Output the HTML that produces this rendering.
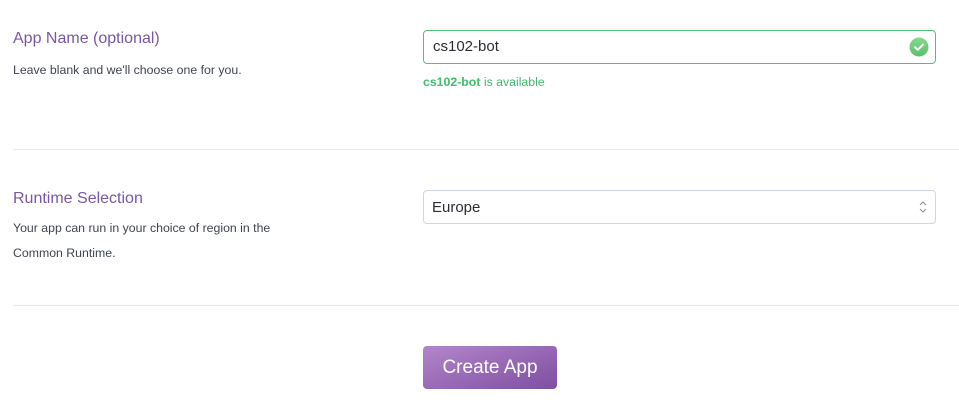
<!DOCTYPE html>
<html><head><style>
body{margin:0;width:959px;height:405px;background:#fff;font-family:"Liberation Sans",sans-serif;position:relative;overflow:hidden}
.a{position:absolute;white-space:nowrap}
.t{color:#79589f;font-size:16px}
.d{color:#3f4452;font-size:12.3px}
.box{position:absolute;left:423px;width:511px;height:32px;border-radius:4px;background:#fff;box-sizing:border-box}
.hr{position:absolute;left:13px;right:0;height:1px;background:#e7e9ee}
</style></head><body>
<div class="a t" style="left:13px;top:30px">App Name (optional)</div>
<div class="a d" style="left:13px;top:63px">Leave blank and we'll choose one for you.</div>
<div class="box" style="top:30px;width:513px;height:34px;border:1px solid #52c07a"></div>
<div class="a" style="left:433px;top:38px;font-size:15px;color:#2c2c35">cs102-bot</div>
<svg class="a" style="left:909px;top:37px" width="20" height="20" viewBox="0 0 20 20"><defs><linearGradient id="g" x1="0" y1="0" x2="0" y2="1"><stop offset="0" stop-color="#86da8f"/><stop offset="1" stop-color="#5bc06d"/></linearGradient></defs><circle cx="10" cy="10" r="9.5" fill="url(#g)"/><path d="M6 10.2l2.7 2.6L14 7.6" fill="none" stroke="#fff" stroke-width="2" stroke-linecap="round" stroke-linejoin="round"/></svg>
<div class="a" style="left:423px;top:75px;font-size:12.3px;color:#3fbc6c"><b>cs102-bot</b> is available</div>
<div class="hr" style="top:149px"></div>
<div class="a t" style="left:13px;top:190px">Runtime Selection</div>
<div class="a d" style="left:13px;top:221px">Your app can run in your choice of region in the</div>
<div class="a d" style="left:13px;top:246px">Common Runtime.</div>
<div class="box" style="top:190px;width:513px;height:34px;border:1px solid #cfd7e6"></div>
<div class="a" style="left:432px;top:199px;font-size:15px;color:#2c2c35">Europe</div>
<svg class="a" style="left:918px;top:199px" width="10" height="16" viewBox="0 0 10 16"><path d="M2 6l3-3 3 3M2 10l3 3 3-3" fill="none" stroke="#8a91a0" stroke-width="1.1"/></svg>
<div class="hr" style="top:305px"></div>
<div class="a" style="left:423px;top:346px;width:134px;height:43px;border-radius:4px;background:linear-gradient(160deg,#b286cb,#7f4ea1);color:#fff;font-size:19px;line-height:44px;text-align:center">Create App</div>
</body></html>
